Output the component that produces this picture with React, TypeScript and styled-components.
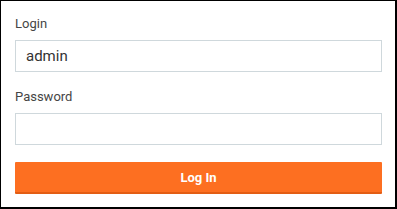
import React, { useState } from "react";
import styled, { createGlobalStyle } from "styled-components";

const GlobalStyle = createGlobalStyle`
  html, body {
    margin: 0;
    padding: 0;
    background: #ffffff;
  }
  body {
    font-family: Roboto, "Liberation Sans", Arial, sans-serif;
  }
`;

const Frame = styled.div`
  box-sizing: border-box;
  width: 397px;
  height: 209px;
  background: #ffffff;
  border-style: solid;
  border-color: #000000;
  border-width: 1px 2px 2px 1px;
  padding: 13px 13px 0 14px;
`;

const Form = styled.form`
  display: flex;
  flex-direction: column;
`;

const Field = styled.div<{ $gap: number }>`
  display: flex;
  flex-direction: column;
  margin-bottom: ${(p) => p.$gap}px;
`;

const Label = styled.label`
  font-size: 13px;
  line-height: 18px;
  color: #454545;
  padding-top: 1px;
  margin-bottom: 7px;
`;

const Input = styled.input`
  box-sizing: border-box;
  width: 100%;
  height: 32px;
  border: 1px solid #cfd8dc;
  border-radius: 0;
  padding: 0 10px;
  font-family: Roboto, "Liberation Sans", Arial, sans-serif;
  font-size: 15px;
  color: #333333;
  outline: none;
  background: #ffffff;
`;

const SubmitButton = styled.button`
  box-sizing: border-box;
  width: 100%;
  height: 32px;
  border: none;
  border-bottom: 2px solid #e35d14;
  border-radius: 1px;
  background: #fd6f21;
  color: #ffffff;
  font-family: Roboto, "Liberation Sans", Arial, sans-serif;
  font-weight: 700;
  font-size: 13px;
  cursor: pointer;
  padding: 0;
`;

export default function App() {
  const [login, setLogin] = useState("admin");
  const [password, setPassword] = useState("");

  return (
    <>
      <GlobalStyle />
      <Frame>
        <Form onSubmit={(e) => e.preventDefault()}>
          <Field $gap={15}>
            <Label htmlFor="login">Login</Label>
            <Input
              id="login"
              type="text"
              value={login}
              onChange={(e) => setLogin(e.target.value)}
            />
          </Field>
          <Field $gap={17}>
            <Label htmlFor="password">Password</Label>
            <Input
              id="password"
              type="password"
              value={password}
              onChange={(e) => setPassword(e.target.value)}
            />
          </Field>
          <SubmitButton type="submit">Log In</SubmitButton>
        </Form>
      </Frame>
    </>
  );
}
